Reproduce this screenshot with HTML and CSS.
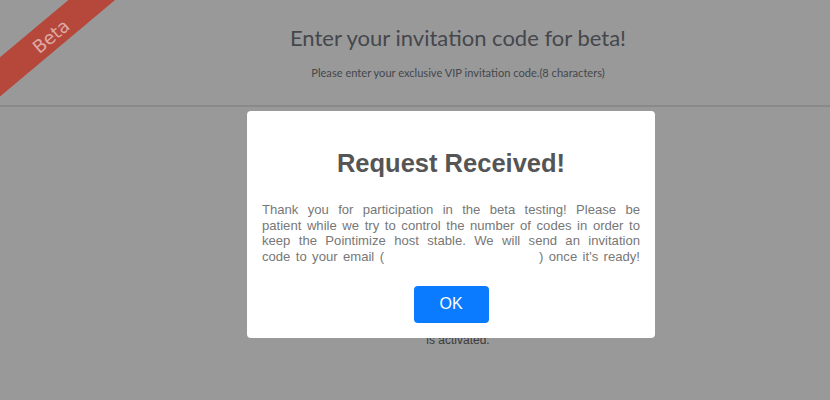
FILE: index.html
```html
<!DOCTYPE html>
<html>
<head>
<meta charset="utf-8">
<link rel="stylesheet" href="styles.css">
</head>
<body>
<div class="page">
  <header class="head">
    <h1 class="head-title">Enter your invitation code for beta!</h1>
    <p class="head-sub">Please enter your exclusive VIP invitation code.(8 characters)</p>
  </header>
  <main class="content">
    <p class="note">is activated.</p>
  </main>
</div>
<div class="overlay"></div>
<div class="ribbon"><span>Beta</span></div>
<div class="modal">
  <h2 class="modal-title">Request Received!</h2>
  <p class="modal-text">
    <span class="line">Thank you for participation in the beta testing! Please be</span>
    <span class="line">patient while we try to control the number of codes in order to</span>
    <span class="line">keep the Pointimize host stable. We will send an invitation</span>
    <span class="line">code to your email (<span class="email"></span>) once it's ready!</span>
  </p>
  <div class="modal-actions"><button class="ok-btn">OK</button></div>
</div>
</body>
</html>
```
FILE: styles.css
```css
html, body {
  margin: 0;
  padding: 0;
  width: 830px;
  height: 400px;
  overflow: hidden;
  background: #fff;
}
.page {
  width: 830px;
  height: 400px;
  display: flex;
  flex-direction: column;
}
.head {
  padding-left: 86px;
  height: 105px;
  border-bottom: 2px solid #e4e4e4;
  display: flex;
  flex-direction: column;
  align-items: center;
  font-family: Lato, "Open Sans", sans-serif;
  color: #737780;
}
.head-title {
  margin: 23px 0 0;
  font-size: 22px;
  font-weight: 400;
  line-height: 30px;
}
.head-sub {
  margin: 13px 0 0;
  font-size: 11.1px;
  line-height: 14px;
}
.content {
  padding-left: 86px;
  display: flex;
  justify-content: center;
  padding-top: 226px;
}
.note {
  margin: 0;
  font-family: "Liberation Sans", Arial, sans-serif;
  font-size: 12px;
  color: #666;
}
.overlay {
  position: fixed;
  inset: 0;
  background: rgba(0, 0, 0, 0.4);
}
.ribbon {
  position: fixed;
  left: -50px;
  top: 20px;
  width: 200px;
  height: 30px;
  padding-top: 3px;
  box-sizing: border-box;
  background: #b5473b;
  transform: rotate(-40deg);
  display: flex;
  align-items: center;
  justify-content: center;
}
.ribbon span {
  font-family: "DejaVu Sans", sans-serif;
  font-size: 18px;
  line-height: 20px;
  color: rgba(255, 255, 255, 0.55);
}
.modal {
  position: fixed;
  left: 247px;
  top: 111px;
  width: 378px;
  height: 197px;
  padding: 15px;
  background: #fff;
  border-radius: 4px;
  display: flex;
  flex-direction: column;
  font-family: "Liberation Sans", Arial, sans-serif;
}
.modal-title {
  margin: 22px 0 0;
  text-align: center;
  font-size: 25.5px;
  line-height: 30px;
  font-weight: 700;
  color: #555;
}
.modal-text {
  margin: 24px 0 0;
  font-size: 13.1px;
  line-height: 15.7px;
  color: #777;
}
.line {
  display: block;
  white-space: nowrap;
  text-align: justify;
  text-align-last: justify;
}
.email {
  display: inline-block;
  width: 155px;
}
.modal-actions {
  margin-top: 21px;
  display: flex;
  justify-content: center;
}
.ok-btn {
  width: 75px;
  height: 37px;
  border: 0;
  border-radius: 4px;
  background: #0a7bff;
  color: #fff;
  font-family: "Liberation Sans", Arial, sans-serif;
  font-size: 16px;
  padding: 0;
}
```
